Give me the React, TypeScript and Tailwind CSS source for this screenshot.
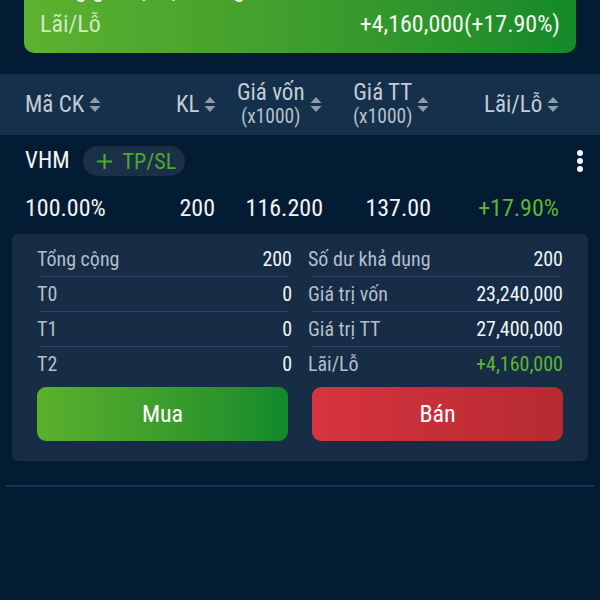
import React from "react";

const Sort = () => (
  <svg width="12" height="17" viewBox="0 0 12 17" className="ml-[5px] shrink-0">
    <path d="M6 1 L11.5 7 L0.5 7 Z" fill="#8d9bab" />
    <path d="M6 16 L11.5 10 L0.5 10 Z" fill="#8d9bab" />
  </svg>
);

const DetailRow = ({ label, value, green, last }: { label: string; value: string; green?: boolean; last?: boolean }) => (
  <div className="flex flex-col">
    <div className="flex items-center justify-between h-[34px]">
      <span className="text-[#b2bfcc]">{label}</span>
      <span className={green ? "text-[#5db531]" : "text-[#f1f4f8]"}>{value}</span>
    </div>
    {last ? null : <div className="mx-[3px] h-px bg-[#2c4761]" />}
  </div>
);

export default function App() {
  return (
    <div
      className="w-[600px] h-[600px] overflow-hidden bg-[#031c33] text-white"
      style={{ fontFamily: "'Roboto Condensed', sans-serif" }}
    >
      {/* Top summary card */}
      <div className="px-[24px]">
        <div className="-mt-[31px] rounded-[10px] bg-gradient-to-r from-[#5db22f] to-[#138a2a] px-[16px] pb-[11px] pt-[3px] text-[24px] leading-[35px]">
          <div className="flex justify-between text-[#eef7e8]">
            <span>Tổng giá trị thị trường</span>
            <span>27,400,000</span>
          </div>
          <div className="flex justify-between">
            <span className="text-[#cfe9c0]">Lãi/Lỗ</span>
            <span className="text-[#f4fbef]">+4,160,000(+17.90%)</span>
          </div>
        </div>
      </div>

      {/* Table header */}
      <div className="mt-[21px] h-[61px] bg-[#15304a] flex items-center text-[23px] text-[#c3ccd7] leading-[24px]">
        <div className="w-[150px] pl-[25px] flex items-center">
          <span>Mã CK</span>
          <Sort />
        </div>
        <div className="w-[72px] pl-[26px] flex items-center">
          <span>KL</span>
          <Sort />
        </div>
        <div className="w-[116px] pl-[15px] flex items-center">
          <div className="flex flex-col items-center">
            <span>Giá vốn</span>
            <span className="text-[19.5px] text-[#b6c0cc]">(x1000)</span>
          </div>
          <Sort />
        </div>
        <div className="w-[120px] pl-[15px] flex items-center">
          <div className="flex flex-col items-center">
            <span>Giá TT</span>
            <span className="text-[19.5px] text-[#b6c0cc]">(x1000)</span>
          </div>
          <Sort />
        </div>
        <div className="flex-1 pl-[26px] flex items-center">
          <span>Lãi/Lỗ</span>
          <Sort />
        </div>
      </div>

      {/* Stock row */}
      <div className="px-[25px] pt-[10px]">
        <div className="flex items-center h-[32px]">
          <span className="text-[23px] text-[#f3f6f9]">VHM</span>
          <div className="ml-[13px] flex items-center h-[30px] rounded-full bg-[#1a3046] pl-[13px] pr-[9px] text-[#4caa2d] text-[22px]">
            <svg width="17" height="17" viewBox="0 0 17 17" className="mr-[10px]">
              <path d="M8.5 1 V16 M1 8.5 H16" stroke="#4caa2d" strokeWidth="2.2" />
            </svg>
            <span>TP/SL</span>
          </div>
          <div className="ml-auto -mr-[8px] flex flex-col items-center gap-[2px]">
            <span className="block w-[6px] h-[6px] rounded-full bg-[#f2f4f7]" />
            <span className="block w-[6px] h-[6px] rounded-full bg-[#f2f4f7]" />
            <span className="block w-[6px] h-[6px] rounded-full bg-[#f2f4f7]" />
          </div>
        </div>
        <div className="flex items-center h-[30px] mt-[16px] text-[24px] text-[#f1f4f8]">
          <span className="w-[82px]">100.00%</span>
          <span className="w-[108px] text-right">200</span>
          <span className="w-[108px] text-right">116.200</span>
          <span className="w-[108px] text-right">137.00</span>
          <span className="flex-1 text-right pr-[16px] text-[#5db531]">+17.90%</span>
        </div>
      </div>

      {/* Details panel */}
      <div className="mx-[12px] mt-[11px] rounded-[6px] bg-[#162d45] px-[25px] pt-[8px] pb-[20px] text-[20px]">
        <div className="grid grid-cols-2 gap-x-[16px]">
          <div className="flex flex-col">
            <DetailRow label="Tổng cộng" value="200" />
            <DetailRow label="T0" value="0" />
            <DetailRow label="T1" value="0" />
            <DetailRow label="T2" value="0" last />
          </div>
          <div className="flex flex-col">
            <DetailRow label="Số dư khả dụng" value="200" />
            <DetailRow label="Giá trị vốn" value="23,240,000" />
            <DetailRow label="Giá trị TT" value="27,400,000" />
            <DetailRow label="Lãi/Lỗ" value="+4,160,000" green last />
          </div>
        </div>
        <div className="grid grid-cols-2 gap-x-[24px] mt-[6px]">
          <button className="h-[54px] rounded-[9px] bg-gradient-to-r from-[#5ab12c] to-[#0f8a2b] text-[24px] text-white">
            Mua
          </button>
          <button className="h-[54px] rounded-[9px] bg-gradient-to-r from-[#d7343f] to-[#b62a30] text-[24px] text-white">
            Bán
          </button>
        </div>
      </div>

      <div className="mx-[6px] mt-[24px] h-[2px] bg-[#1b344d]" />
    </div>
  );
}
